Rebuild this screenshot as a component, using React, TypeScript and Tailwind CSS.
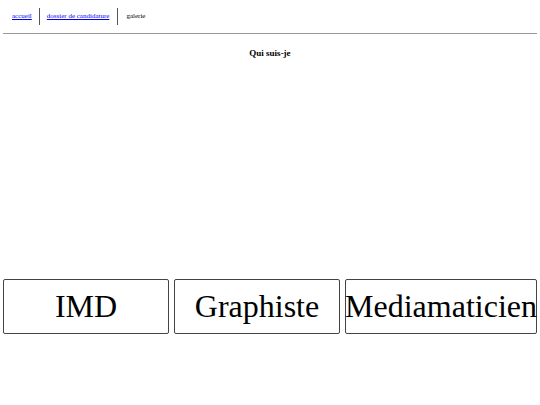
export default function App() {
  const roles = ["IMD", "Graphiste", "Mediamaticien"];
  return (
    <div className="min-h-[405px] bg-white font-[Liberation_Serif,serif] text-black">
      <nav className="flex h-[33px] items-center px-[12px] text-[7px]">
        <a href="#" className="text-[#0000ee] underline">accueil</a>
        <span className="mx-[7px] h-[17px] w-px bg-[#555]" />
        <a href="#" className="text-[#0000ee] underline">dossier de candidature</a>
        <span className="mx-[8px] h-[17px] w-px bg-[#555]" />
        <span>galerie</span>
      </nav>
      <hr className="mx-[3px] border-t border-[#999]" />
      <h2 className="mt-[13px] text-center text-[9px] font-bold">Qui suis-je</h2>
      <div className="mt-[218px] flex gap-[5px] px-[3px]">
        {roles.map((r) => (
          <div
            key={r}
            className="flex h-[55px] min-w-[166px] items-center justify-center rounded-[2px] border border-[#444] px-[1px] text-[32px] leading-none"
          >
            {r}
          </div>
        ))}
      </div>
    </div>
  );
}
